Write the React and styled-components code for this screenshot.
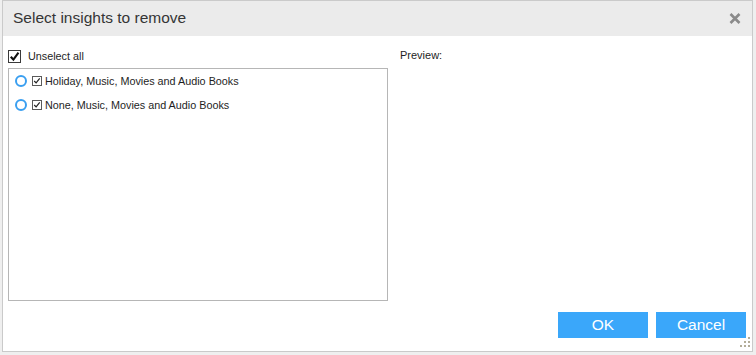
import React, { useState } from "react";
import styled, { createGlobalStyle } from "styled-components";

const GlobalStyle = createGlobalStyle`
  html, body { margin: 0; padding: 0; background: #efefef; }
  body { font-family: "Liberation Sans", Arial, sans-serif; }
  * { box-sizing: border-box; }
`;

const Page = styled.div`
  width: 756px;
  height: 355px;
  padding-left: 2px;
`;

const Dialog = styled.div`
  position: relative;
  width: 751px;
  height: 352px;
  background: #fff;
  border: 1px solid #cacaca;
  display: flex;
  flex-direction: column;
`;

const Header = styled.div`
  height: 35px;
  flex: none;
  background: #ebebeb;
  display: flex;
  align-items: center;
  justify-content: space-between;
  padding: 0 11px 1px 10px;
`;

const Title = styled.div`
  font-size: 15.5px;
  color: #353535;
`;

const CloseButton = styled.button`
  border: 0;
  background: transparent;
  padding: 0;
  width: 12px;
  height: 11px;
  display: flex;
  cursor: pointer;
`;

const Body = styled.div`
  flex: 1;
  display: flex;
  gap: 12px;
  padding: 13px 0 0 5px;
`;

const LeftPane = styled.div`
  width: 380px;
  display: flex;
  flex-direction: column;
  gap: 5px;
`;

const CheckRow = styled.label`
  display: flex;
  align-items: center;
  gap: ${(p) => p.$gap || 4}px;
  height: ${(p) => p.$h || 14}px;
  font-size: 10.8px;
  color: #1e1e1e;
  cursor: default;
`;

const Box = styled.span`
  flex: none;
  width: ${(p) => p.$size}px;
  height: ${(p) => p.$size}px;
  border: 1px solid ${(p) => (p.$size > 11 ? "#3a3a3a" : "#5a5a5a")};
  background: #fff;
  display: flex;
  align-items: center;
  justify-content: center;
`;

const ListBox = styled.div`
  height: 233px;
  border: 1px solid #b6b6b6;
  padding: 0 6px;
`;

const Radio = styled.span`
  flex: none;
  width: 12px;
  height: 12px;
  border-radius: 50%;
  border: 2px solid #3a9ff0;
  background: #fff;
  margin-right: 1px;
`;

const RowText = styled.span`
  margin: -1px 0 0 -1px;
`;

const PreviewPane = styled.div`
  flex: 1;
  font-size: 11px;
  color: #1e1e1e;
`;

const Footer = styled.div`
  flex: none;
  display: flex;
  justify-content: flex-end;
  gap: 8px;
  padding: 0 6px 13px 0;
`;

const Button = styled.button`
  width: 90px;
  height: 26px;
  border: 0;
  background: #3aa7fa;
  color: #fff;
  font-family: "Liberation Sans", Arial, sans-serif;
  font-size: 15.5px;
  padding: 0;
  cursor: pointer;
`;

const Grip = styled.svg`
  position: absolute;
  right: 2px;
  bottom: 4px;
`;

function Check({ size }) {
  const big = size > 11;
  return (
    <svg width={size - 2} height={size - 2} viewBox="0 0 10 10">
      <path
        d={big ? "M1.6 5.2 L4 7.8 L8.6 1.4" : "M1.5 5 L3.9 7.4 L8.4 1.8"}
        fill="none"
        stroke={big ? "#111" : "#222"}
        strokeWidth={big ? 1.9 : 1.5}
      />
    </svg>
  );
}

function CheckBox({ size, checked }) {
  return <Box $size={size}>{checked && <Check size={size} />}</Box>;
}

const items = [
  "Holiday, Music, Movies and Audio Books",
  "None, Music, Movies and Audio Books",
];

export default function App() {
  const [checked, setChecked] = useState(items.map(() => true));
  return (
    <>
      <GlobalStyle />
      <Page>
        <Dialog>
          <Header>
            <Title>Select insights to remove</Title>
            <CloseButton aria-label="Close">
              <svg width="12" height="11" viewBox="0 0 12 11">
                <path d="M1.5 1 L10.5 10 M10.5 1 L1.5 10" stroke="#8a8a8a" strokeWidth="2.6" />
              </svg>
            </CloseButton>
          </Header>
          <Body>
            <LeftPane>
              <CheckRow $gap={7} $h={14}>
                <CheckBox size={13} checked />
                <span>Unselect all</span>
              </CheckRow>
              <ListBox>
                {items.map((t, i) => (
                  <CheckRow key={t} $h={24} $gap={4} onClick={() => setChecked((c) => c.map((v, j) => (j === i ? !v : v)))}>
                    <Radio />
                    <CheckBox size={10} checked={checked[i]} />
                    <RowText>{t}</RowText>
                  </CheckRow>
                ))}
              </ListBox>
            </LeftPane>
            <PreviewPane>Preview:</PreviewPane>
          </Body>
          <Footer>
            <Button>OK</Button>
            <Button>Cancel</Button>
          </Footer>
          <Grip width="10" height="10" viewBox="0 0 10 10">
            <g fill="#b3ad98">
              <rect x="8" y="0" width="2" height="2" />
              <rect x="4" y="4" width="2" height="2" />
              <rect x="8" y="4" width="2" height="2" />
              <rect x="0" y="8" width="2" height="2" />
              <rect x="4" y="8" width="2" height="2" />
              <rect x="8" y="8" width="2" height="2" />
            </g>
          </Grip>
        </Dialog>
      </Page>
    </>
  );
}
